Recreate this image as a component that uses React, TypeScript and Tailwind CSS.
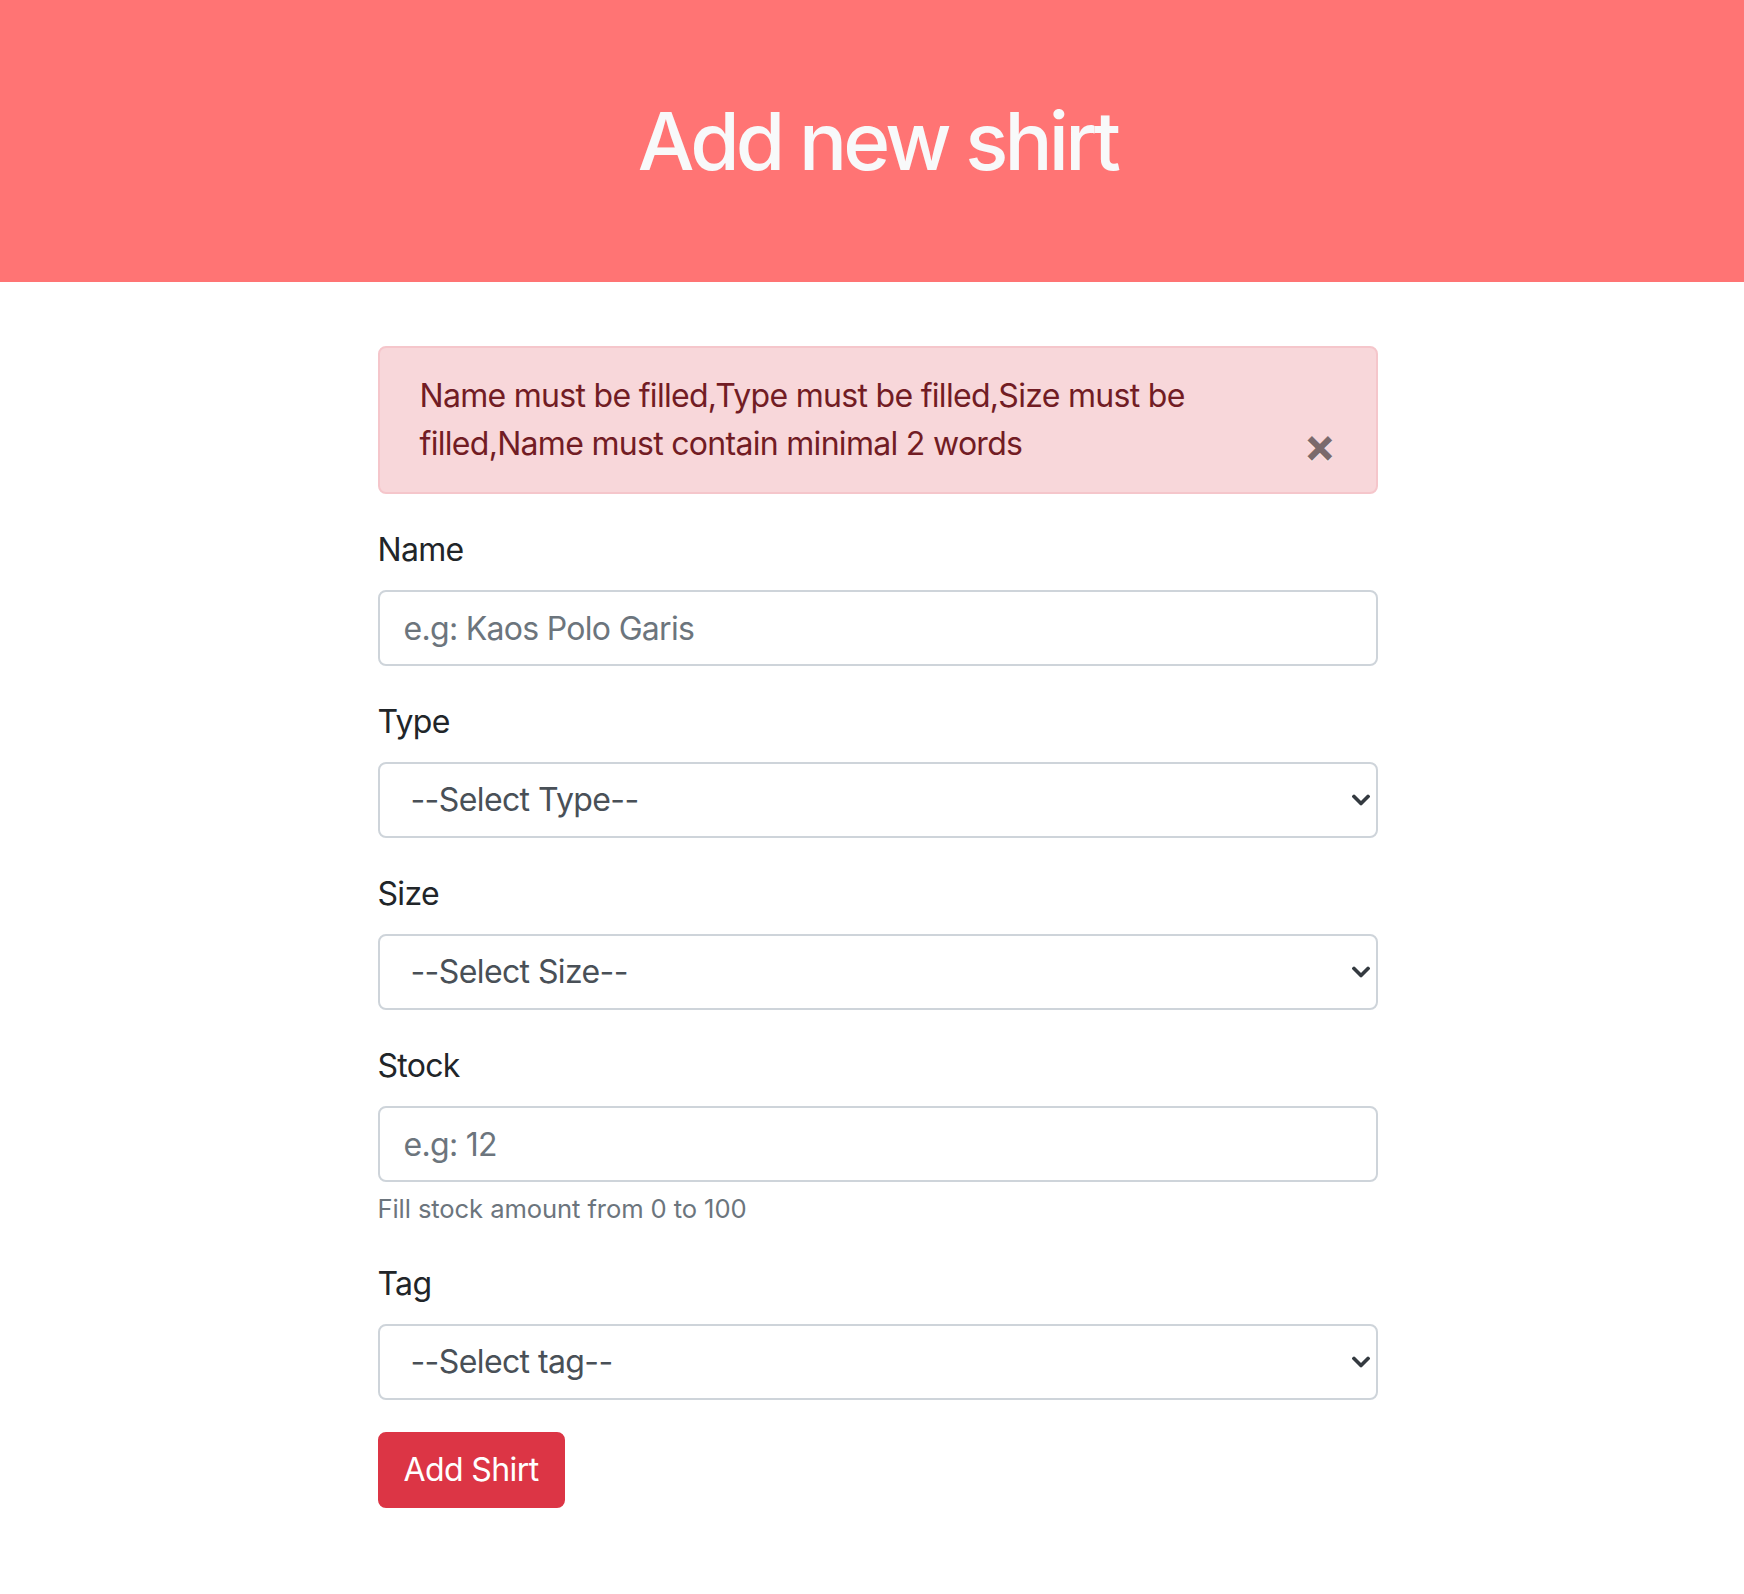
import React, { useState } from 'react';

const inputClass =
  'block w-full h-[76px] border-2 border-[#ced4da] rounded-lg bg-white px-6 text-[32px] leading-[48px] tracking-[-0.7px] text-[#495057] placeholder:text-[#6c757d] outline-none';

function ChevronSelect({ id, placeholder }: { id: string; placeholder: string }) {
  return (
    <div className="relative">
      <select
        id={id}
        defaultValue=""
        className="block w-full h-[76px] appearance-none border-2 border-[#ced4da] rounded-lg bg-white pl-[31px] pr-16 text-[32px] leading-[48px] tracking-[-0.6px] text-[#495057] outline-none"
      >
        <option value="">{placeholder}</option>
      </select>
      <svg
        className="pointer-events-none absolute right-[8px] top-1/2 -translate-y-1/2"
        width="18"
        height="11"
        viewBox="0 0 18 11"
        fill="none"
      >
        <path d="M2 2l7 7 7-7" stroke="#343a40" strokeWidth="3.6" strokeLinecap="square" />
      </svg>
    </div>
  );
}

export default function App() {
  const [showAlert, setShowAlert] = useState(true);

  return (
    <div className="min-h-screen bg-white font-['Inter','Liberation_Sans',sans-serif] text-[#212529]">
      <header className="flex h-[282px] items-center justify-center bg-[#ff7474] pl-[11px]">
        <h1 className="text-[80px] font-medium leading-[96px] tracking-[-3.8px] text-[#f8f9fa]">
          Add new shirt
        </h1>
      </header>

      <div className="pl-[11px]">
        <main className="mx-auto mt-16 w-[1000px] pb-20">
          {showAlert && (
            <div className="relative mb-8 rounded-lg border-2 border-[#f5c6cb] bg-[#f8d7da] py-6 pl-10 pr-32 text-[32px] leading-[48px] tracking-[-0.7px] text-[#721c24]">
              Name must be filled,Type must be filled,Size must be filled,Name must contain minimal 2 words
              <button
                type="button"
                onClick={() => setShowAlert(false)}
                className="absolute right-[40px] top-[73px] text-[48px] font-bold leading-none text-black opacity-50 [text-shadow:0_1px_0_#fff]"
              >
                ×
              </button>
            </div>
          )}

          <form onSubmit={(e) => e.preventDefault()}>
            <div className="mb-8">
              <label htmlFor="name" className="mb-4 block text-[32px] leading-[48px] tracking-[-0.7px]">
                Name
              </label>
              <input id="name" type="text" placeholder="e.g: Kaos Polo Garis" className={inputClass} />
            </div>

            <div className="mb-8">
              <label htmlFor="type" className="mb-4 block text-[32px] leading-[48px] tracking-[-0.7px]">
                Type
              </label>
              <ChevronSelect id="type" placeholder="--Select Type--" />
            </div>

            <div className="mb-8">
              <label htmlFor="size" className="mb-4 block text-[32px] leading-[48px] tracking-[-0.7px]">
                Size
              </label>
              <ChevronSelect id="size" placeholder="--Select Size--" />
            </div>

            <div className="mb-8">
              <label htmlFor="stock" className="mb-4 block text-[32px] leading-[48px] tracking-[-0.7px]">
                Stock
              </label>
              <input id="stock" type="text" placeholder="e.g: 12" className={inputClass} />
              <small className="mt-2 block text-[25.6px] leading-[38.4px] tracking-[-0.1px] text-[#6c757d]">
                Fill stock amount from 0 to 100
              </small>
            </div>

            <div className="mb-8">
              <label htmlFor="tag" className="mb-4 block text-[32px] leading-[48px] tracking-[-0.7px]">
                Tag
              </label>
              <ChevronSelect id="tag" placeholder="--Select tag--" />
            </div>

            <button
              type="submit"
              className="h-[76px] rounded-lg border-2 border-[#dc3545] bg-[#dc3545] px-6 text-[32px] leading-[48px] tracking-[-0.6px] text-white"
            >
              Add Shirt
            </button>
          </form>
        </main>
      </div>
    </div>
  );
}
